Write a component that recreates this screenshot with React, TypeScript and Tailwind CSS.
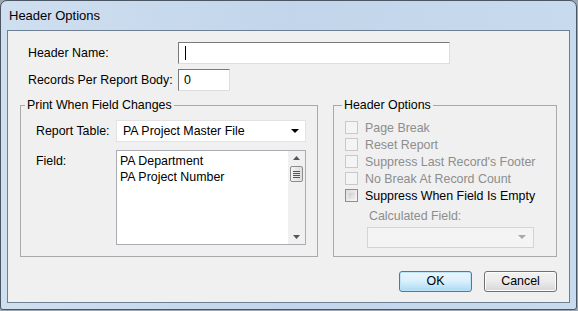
import React from "react";

const font = { fontFamily: '"Liberation Sans", Arial, sans-serif' };

function Check({ enabled, label }: { enabled?: boolean; label: string }) {
  return (
    <div className="flex items-center h-[17px]">
      <div
        className={
          enabled
            ? "w-[13px] h-[13px] border border-[#8e8f8f] bg-gradient-to-br from-[#dcdcdc] to-[#f8f8f8] p-[2px]"
            : "w-[13px] h-[13px] border border-[#c9c9c9] bg-[#f4f4f4]"
        }
      >
        {enabled && <div className="w-full h-full bg-gradient-to-br from-[#cbcbcb] to-[#f0f0f0] border border-[#e2e2e2]" />}
      </div>
      <span className={"ml-[7px] text-[12.4px] leading-[14px] " + (enabled ? "text-black" : "text-[#8d8d8d]")}>{label}</span>
    </div>
  );
}

function Arrow({ color }: { color: string }) {
  return (
    <svg width="9" height="5" viewBox="0 0 9 5">
      <polygon points="0,0 8,0 4,4" fill={color} />
    </svg>
  );
}

export default function App() {
  return (
    <div className="w-[578px] h-[311px] bg-[#9aa6b2] overflow-hidden" style={font}>
      <div className="w-[577px] h-[310px] rounded-t-[7px] rounded-b-[3px] border border-[#4a5663] bg-gradient-to-r from-[#cfdff0] via-[#c2d5ea] to-[#c8daed] flex flex-col">
        <div className="h-[29px] flex items-center pl-[8px] text-[13px] text-black">Header Options</div>
        <div className="ml-[6px] mr-[6px] h-[273px] border border-[#6f7f92] bg-[#f0f0f0] flex flex-col relative">
          {/* Row 1 */}
          <div className="flex items-center mt-[11px] h-[22px]">
            <span className="ml-[20px] w-[150px] text-[12.4px]">Header Name:</span>
            <div className="w-[272px] h-[22px] border border-t-[#7a7a7a] border-l-[#7a7a7a] border-r-[#dedede] border-b-[#dedede] bg-white flex items-center pl-[6px]">
              <div className="w-[1px] h-[14px] bg-black" />
            </div>
          </div>
          {/* Row 2 */}
          <div className="flex items-center mt-[5px] h-[22px]">
            <span className="ml-[20px] w-[150px] text-[12.4px]">Records Per Report Body:</span>
            <div className="w-[52px] h-[22px] border border-t-[#7a7a7a] border-l-[#7a7a7a] border-r-[#dedede] border-b-[#dedede] bg-white flex items-center pl-[5px] text-[12.4px]">
              0
            </div>
          </div>
          {/* Groups */}
          <div className="flex mt-[7px] ml-[12px]">
            <fieldset className="w-[298px] h-[159px] border border-[#a9a9a9] pl-[15px] pr-[11px]">
              <legend className="text-[12.4px] leading-[14px] px-[2px] ml-[-11px]">Print When Field Changes</legend>
              <div className="flex items-center mt-[8px]">
                <span className="w-[80px] text-[12.4px]">Report Table:</span>
                <div className="w-[190px] h-[22px] bg-white border border-[#e2e2e2] flex items-center justify-between pl-[6px] pr-[5px] text-[12.4px]">
                  <span>PA Project Master File</span>
                  <Arrow color="#000" />
                </div>
              </div>
              <div className="flex mt-[8px]">
                <span className="w-[80px] text-[12.4px] mt-[2px]">Field:</span>
                <div className="w-[190px] h-[95px] bg-white border border-[#abadb3] flex">
                  <div className="flex-1 pl-[3px] pt-[2px] text-[12.4px] leading-[16px]">
                    <div>PA Department</div>
                    <div>PA Project Number</div>
                  </div>
                  <div className="w-[17px] bg-[#f0f0f0] flex flex-col items-center justify-between py-[5px]">
                    <svg width="7" height="4" viewBox="0 0 7 4"><polygon points="0,4 7,4 3.5,0" fill="#555" /></svg>
                    <div className="flex-1 w-full flex flex-col items-center pt-[6px]">
                      <div className="w-[13px] h-[16px] border border-[#8c8c8c] rounded-[2px] bg-gradient-to-r from-[#f4f4f4] to-[#dedede] flex flex-col items-center justify-center gap-[1px]">
                        <div className="w-[7px] h-[1px] bg-[#555]" />
                        <div className="w-[7px] h-[1px] bg-[#555]" />
                        <div className="w-[7px] h-[1px] bg-[#555]" />
                        <div className="w-[7px] h-[1px] bg-[#555]" />
                      </div>
                    </div>
                    <svg width="7" height="4" viewBox="0 0 7 4"><polygon points="0,0 7,0 3.5,4" fill="#555" /></svg>
                  </div>
                </div>
              </div>
            </fieldset>
            <fieldset className="ml-[15px] w-[224px] h-[159px] border border-[#a9a9a9] pl-[11px]">
              <legend className="text-[12.4px] leading-[14px] px-[2px] ml-[-3px]">Header Options</legend>
              <div className="flex flex-col mt-[7px]">
                <Check label="Page Break" />
                <Check label="Reset Report" />
                <Check label="Suppress Last Record's Footer" />
                <Check label="No Break At Record Count" />
                <Check enabled label="Suppress When Field Is Empty" />
              </div>
              <div className="ml-[24px] mt-[5px] text-[12.4px] leading-[14px] text-[#8d8d8d]">Calculated Field:</div>
              <div className="ml-[22px] mt-[4px] w-[167px] h-[21px] border border-[#d4d4d4] bg-[#f4f4f4] flex items-center justify-end pr-[6px]">
                <Arrow color="#a8a8a8" />
              </div>
            </fieldset>
          </div>
          {/* Buttons */}
          <div className="flex justify-end mt-[14px] mr-[12px] gap-[12px]">
            <div className="w-[73px] h-[21px] rounded-[3px] border border-[#3c7fb1] bg-gradient-to-b from-[#eaf6fd] via-[#d9f0fc] to-[#a7d9f5] shadow-[inset_0_0_0_1px_#bfe4f7] flex items-center justify-center text-[12.4px]">
              OK
            </div>
            <div className="w-[73px] h-[21px] rounded-[3px] border border-[#707070] bg-gradient-to-b from-[#f2f2f2] via-[#ebebeb] to-[#d6d6d6] shadow-[inset_0_0_0_1px_#fcfcfc] flex items-center justify-center text-[12.4px]">
              Cancel
            </div>
          </div>
        </div>
      </div>
    </div>
  );
}
